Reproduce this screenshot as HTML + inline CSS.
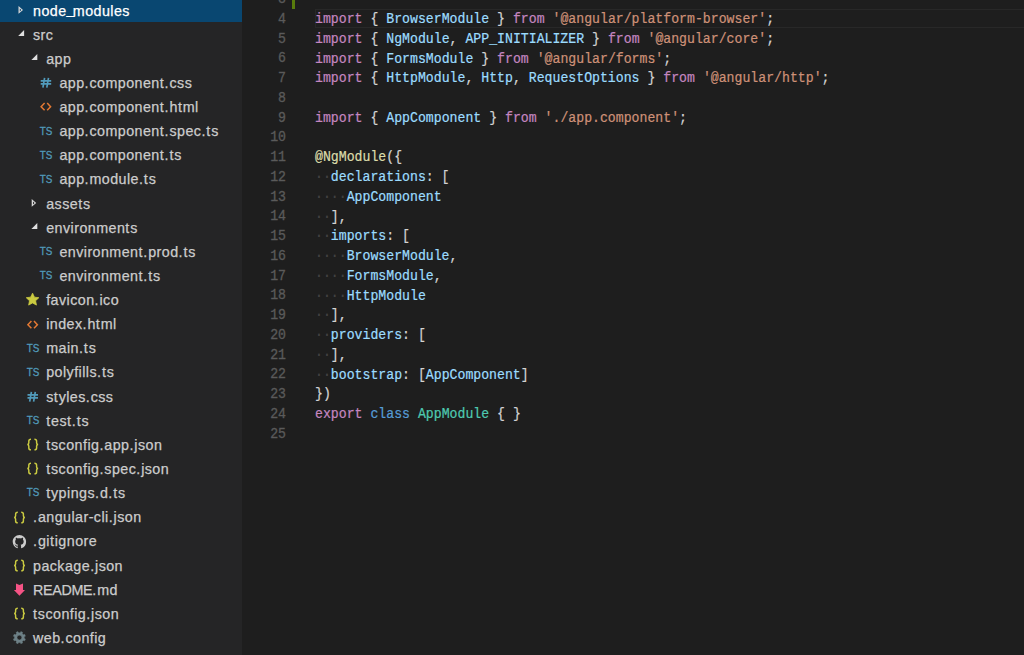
<!DOCTYPE html>
<html><head><meta charset="utf-8"><style>
html,body{margin:0;padding:0;width:1024px;height:655px;overflow:hidden;background:#1e1e1e}
#side{position:absolute;left:0;top:0;width:242px;height:655px;background:#252526;overflow:hidden}
.row{position:absolute;left:0;width:242px;height:24.13px}
.row.sel{background:#094771}
.nm{position:absolute;top:0;font-family:"Liberation Sans",sans-serif;font-size:14.3px;letter-spacing:0.44px;-webkit-text-stroke:0.25px currentColor;line-height:24.13px;color:#cccccc;white-space:nowrap}
.sel .nm{color:#ffffff} .nm .d{letter-spacing:0.9px} .nm .t{letter-spacing:0.87px} .nm .u{letter-spacing:-0.31px} .nm .us{position:relative;top:-1.6px;letter-spacing:-1.7px}
.ic{position:absolute;left:0;top:0;display:block;overflow:visible}
#ed{position:absolute;left:242px;top:0;width:782px;height:655px;background:#1e1e1e;overflow:hidden}
.ln,.cl{position:absolute;font-family:"Liberation Mono",monospace;font-size:13.2px;line-height:19.75px;transform:scaleY(1.1);transform-origin:0 14.4px}
.ln{left:0;width:44px;text-align:right;color:#5a5a5a;-webkit-text-stroke:0.3px currentColor;margin-top:-0.2px}
.cl{left:73px;color:#d4d4d4;white-space:pre;-webkit-text-stroke:0.2px currentColor}
i{font-style:normal} .k{color:#c586c0} .v{color:#9cdcfe} .s{color:#ce9178} .p{color:#d4d4d4} .f{color:#dcdcaa} .b{color:#569cd6} .c{color:#4ec9b0} .w{color:#444444}
#hl{position:absolute;left:73px;right:0;top:9px;height:16.6px;border:1px solid #282828;border-right:none}
#git{position:absolute;left:50px;top:0;width:3px;height:9px;background:#587c0c}
</style></head><body>
<div id="side">
<div class="row sel" style="top:-2.15px"><span class="nm" style="left:33.0px;top:0.7px">node<i class=us>_</i>modules</span><svg class="ic" width="242" height="25"><path d="M18.50,8.1 L23.00,11.95 L18.50,15.8 Z M19.80,10.5 L19.80,13.4 L21.30,11.95 Z" fill="#d8d8d8" fill-rule="evenodd"/></svg></div>
<div class="row" style="top:21.98px"><span class="nm" style="left:33.0px;top:0.7px">src</span><svg class="ic" width="242" height="25"><path d="M18.20,14.12 L24.10,14.12 L24.10,7.92 Z" fill="#e0e0e0"/></svg></div>
<div class="row" style="top:46.11px"><span class="nm" style="left:46.2px;top:0.7px">app</span><svg class="ic" width="242" height="25"><path d="M31.40,14.12 L37.30,14.12 L37.30,7.92 Z" fill="#e0e0e0"/></svg></div>
<div class="row" style="top:70.24px"><span class="nm" style="left:59.4px;top:0.7px">app<i class=d>.</i>componen<i class=t>t</i><i class=d>.</i>css</span><svg class="ic" width="242" height="25"><path d="M40.70,10.95 H51.20 M40.70,13.9 H51.20 M44.60,7.9 L42.90,17.7 M48.50,7.9 L46.80,17.7" stroke="#519aba" stroke-width="1.7" fill="none"/></svg></div>
<div class="row" style="top:94.37px"><span class="nm" style="left:59.4px;top:0.7px">app<i class=d>.</i>componen<i class=t>t</i><i class=d>.</i>h<i class=t>t</i>ml</span><svg class="ic" width="242" height="25"><path d="M44.60,9.0 L41.10,12.65 L44.60,16.3 M47.20,9.0 L50.60,12.65 L47.20,16.3" stroke="#e37933" stroke-width="1.5" fill="none"/></svg></div>
<div class="row" style="top:118.50px"><span class="nm" style="left:59.4px;top:0.7px">app<i class=d>.</i>componen<i class=t>t</i><i class=d>.</i>spec<i class=d>.</i><i class=t>t</i>s</span><svg class="ic" width="242" height="25"><text x="39.85" y="15.8" font-family="Liberation Sans" font-size="11.5" fill="#519aba" stroke="#519aba" stroke-width="0.3" textLength="12.6" lengthAdjust="spacingAndGlyphs">TS</text></svg></div>
<div class="row" style="top:142.63px"><span class="nm" style="left:59.4px;top:0.7px">app<i class=d>.</i>componen<i class=t>t</i><i class=d>.</i><i class=t>t</i>s</span><svg class="ic" width="242" height="25"><text x="39.85" y="15.8" font-family="Liberation Sans" font-size="11.5" fill="#519aba" stroke="#519aba" stroke-width="0.3" textLength="12.6" lengthAdjust="spacingAndGlyphs">TS</text></svg></div>
<div class="row" style="top:166.76px"><span class="nm" style="left:59.4px;top:0.7px">app<i class=d>.</i>module<i class=d>.</i><i class=t>t</i>s</span><svg class="ic" width="242" height="25"><text x="39.85" y="15.8" font-family="Liberation Sans" font-size="11.5" fill="#519aba" stroke="#519aba" stroke-width="0.3" textLength="12.6" lengthAdjust="spacingAndGlyphs">TS</text></svg></div>
<div class="row" style="top:190.89px"><span class="nm" style="left:46.2px;top:0.7px">asse<i class=t>t</i>s</span><svg class="ic" width="242" height="25"><path d="M31.70,8.1 L36.20,11.95 L31.70,15.8 Z M33.00,10.5 L33.00,13.4 L34.50,11.95 Z" fill="#d8d8d8" fill-rule="evenodd"/></svg></div>
<div class="row" style="top:215.02px"><span class="nm" style="left:46.2px;top:0.7px">environmen<i class=t>t</i>s</span><svg class="ic" width="242" height="25"><path d="M31.40,14.12 L37.30,14.12 L37.30,7.92 Z" fill="#e0e0e0"/></svg></div>
<div class="row" style="top:239.15px"><span class="nm" style="left:59.4px;top:0.7px">environmen<i class=t>t</i><i class=d>.</i>prod<i class=d>.</i><i class=t>t</i>s</span><svg class="ic" width="242" height="25"><text x="39.85" y="15.8" font-family="Liberation Sans" font-size="11.5" fill="#519aba" stroke="#519aba" stroke-width="0.3" textLength="12.6" lengthAdjust="spacingAndGlyphs">TS</text></svg></div>
<div class="row" style="top:263.28px"><span class="nm" style="left:59.4px;top:0.7px">environmen<i class=t>t</i><i class=d>.</i><i class=t>t</i>s</span><svg class="ic" width="242" height="25"><text x="39.85" y="15.8" font-family="Liberation Sans" font-size="11.5" fill="#519aba" stroke="#519aba" stroke-width="0.3" textLength="12.6" lengthAdjust="spacingAndGlyphs">TS</text></svg></div>
<div class="row" style="top:287.41px"><span class="nm" style="left:46.2px;top:0.7px">favicon<i class=d>.</i>ico</span><svg class="ic" width="242" height="25"><path d="M32.55,6.15 L34.43,10.16 L38.83,10.71 L35.59,13.74 L36.43,18.09 L32.55,15.95 L28.67,18.09 L29.51,13.74 L26.27,10.71 L30.67,10.16 Z" fill="#cbcb41" stroke="#cbcb41" stroke-width="0.8" stroke-linejoin="round"/></svg></div>
<div class="row" style="top:311.54px"><span class="nm" style="left:46.2px;top:0.7px">index<i class=d>.</i>h<i class=t>t</i>ml</span><svg class="ic" width="242" height="25"><path d="M31.40,9.0 L27.90,12.65 L31.40,16.3 M34.00,9.0 L37.40,12.65 L34.00,16.3" stroke="#e37933" stroke-width="1.5" fill="none"/></svg></div>
<div class="row" style="top:335.67px"><span class="nm" style="left:46.2px;top:0.7px">main<i class=d>.</i><i class=t>t</i>s</span><svg class="ic" width="242" height="25"><text x="26.65" y="15.8" font-family="Liberation Sans" font-size="11.5" fill="#519aba" stroke="#519aba" stroke-width="0.3" textLength="12.6" lengthAdjust="spacingAndGlyphs">TS</text></svg></div>
<div class="row" style="top:359.80px"><span class="nm" style="left:46.2px;top:0.7px">polyfills<i class=d>.</i><i class=t>t</i>s</span><svg class="ic" width="242" height="25"><text x="26.65" y="15.8" font-family="Liberation Sans" font-size="11.5" fill="#519aba" stroke="#519aba" stroke-width="0.3" textLength="12.6" lengthAdjust="spacingAndGlyphs">TS</text></svg></div>
<div class="row" style="top:383.93px"><span class="nm" style="left:46.2px;top:0.7px">s<i class=t>t</i>yles<i class=d>.</i>css</span><svg class="ic" width="242" height="25"><path d="M27.50,10.95 H38.00 M27.50,13.9 H38.00 M31.40,7.9 L29.70,17.7 M35.30,7.9 L33.60,17.7" stroke="#519aba" stroke-width="1.7" fill="none"/></svg></div>
<div class="row" style="top:408.06px"><span class="nm" style="left:46.2px;top:0.7px"><i class=t>t</i>es<i class=t>t</i><i class=d>.</i><i class=t>t</i>s</span><svg class="ic" width="242" height="25"><text x="26.65" y="15.8" font-family="Liberation Sans" font-size="11.5" fill="#519aba" stroke="#519aba" stroke-width="0.3" textLength="12.6" lengthAdjust="spacingAndGlyphs">TS</text></svg></div>
<div class="row" style="top:432.19px"><span class="nm" style="left:46.2px;top:0.7px"><i class=t>t</i>sconfig<i class=d>.</i>app<i class=d>.</i>json</span><svg class="ic" width="242" height="25"><path d="M31.00,7.25 C29.40,7.25 28.80,7.8 28.80,9.2 L28.80,11.1 C28.80,12.0 28.10,12.45 27.30,12.5 C28.10,12.55 28.80,13.0 28.80,13.9 L28.80,16.0 C28.80,17.3 29.40,17.85 31.00,17.85 M34.40,7.25 C36.00,7.25 36.60,7.8 36.60,9.2 L36.60,11.1 C36.60,12.0 37.30,12.45 38.10,12.5 C37.30,12.55 36.60,13.0 36.60,13.9 L36.60,16.0 C36.60,17.3 36.00,17.85 34.40,17.85" stroke="#cbcb41" stroke-width="1.45" fill="none"/></svg></div>
<div class="row" style="top:456.32px"><span class="nm" style="left:46.2px;top:0.7px"><i class=t>t</i>sconfig<i class=d>.</i>spec<i class=d>.</i>json</span><svg class="ic" width="242" height="25"><path d="M31.00,7.25 C29.40,7.25 28.80,7.8 28.80,9.2 L28.80,11.1 C28.80,12.0 28.10,12.45 27.30,12.5 C28.10,12.55 28.80,13.0 28.80,13.9 L28.80,16.0 C28.80,17.3 29.40,17.85 31.00,17.85 M34.40,7.25 C36.00,7.25 36.60,7.8 36.60,9.2 L36.60,11.1 C36.60,12.0 37.30,12.45 38.10,12.5 C37.30,12.55 36.60,13.0 36.60,13.9 L36.60,16.0 C36.60,17.3 36.00,17.85 34.40,17.85" stroke="#cbcb41" stroke-width="1.45" fill="none"/></svg></div>
<div class="row" style="top:480.45px"><span class="nm" style="left:46.2px;top:0.7px"><i class=t>t</i>ypings<i class=d>.</i>d<i class=d>.</i><i class=t>t</i>s</span><svg class="ic" width="242" height="25"><text x="26.65" y="15.8" font-family="Liberation Sans" font-size="11.5" fill="#519aba" stroke="#519aba" stroke-width="0.3" textLength="12.6" lengthAdjust="spacingAndGlyphs">TS</text></svg></div>
<div class="row" style="top:504.58px"><span class="nm" style="left:33.0px;top:0.7px"><i class=d>.</i>angular-cli<i class=d>.</i>json</span><svg class="ic" width="242" height="25"><path d="M17.80,7.25 C16.20,7.25 15.60,7.8 15.60,9.2 L15.60,11.1 C15.60,12.0 14.90,12.45 14.10,12.5 C14.90,12.55 15.60,13.0 15.60,13.9 L15.60,16.0 C15.60,17.3 16.20,17.85 17.80,17.85 M21.20,7.25 C22.80,7.25 23.40,7.8 23.40,9.2 L23.40,11.1 C23.40,12.0 24.10,12.45 24.90,12.5 C24.10,12.55 23.40,13.0 23.40,13.9 L23.40,16.0 C23.40,17.3 22.80,17.85 21.20,17.85" stroke="#cbcb41" stroke-width="1.45" fill="none"/></svg></div>
<div class="row" style="top:528.71px"><span class="nm" style="left:33.0px;top:0.7px"><i class=d>.</i>gi<i class=t>t</i>ignore</span><svg class="ic" width="242" height="25"><path transform="translate(12.70,6.1) scale(0.8375)" d="M8 0C3.58 0 0 3.58 0 8c0 3.54 2.29 6.53 5.47 7.59.4.07.55-.17.55-.38 0-.19-.01-.82-.01-1.49-2.01.37-2.53-.49-2.69-.94-.09-.23-.48-.94-.82-1.13-.28-.15-.68-.52-.01-.53.63-.01 1.08.58 1.23.82.72 1.21 1.87.87 2.33.66.07-.52.28-.87.51-1.07-1.78-.2-3.64-.89-3.64-3.95 0-.87.31-1.59.82-2.15-.08-.2-.36-1.02.08-2.12 0 0 .67-.21 2.2.82.64-.18 1.32-.27 2-.27.68 0 1.36.09 2 .27 1.53-1.04 2.2-.82 2.2-.82.44 1.1.16 1.92.08 2.12.51.56.82 1.27.82 2.15 0 3.07-1.87 3.75-3.65 3.95.29.25.54.73.54 1.48 0 1.07-.01 1.930-.01 2.2 0 .21.15.46.55.38A8.013 8.013 0 0016 8c0-4.42-3.58-8-8-8z" fill="#cccccc"/></svg></div>
<div class="row" style="top:552.84px"><span class="nm" style="left:33.0px;top:0.7px">package<i class=d>.</i>json</span><svg class="ic" width="242" height="25"><path d="M17.80,7.25 C16.20,7.25 15.60,7.8 15.60,9.2 L15.60,11.1 C15.60,12.0 14.90,12.45 14.10,12.5 C14.90,12.55 15.60,13.0 15.60,13.9 L15.60,16.0 C15.60,17.3 16.20,17.85 17.80,17.85 M21.20,7.25 C22.80,7.25 23.40,7.8 23.40,9.2 L23.40,11.1 C23.40,12.0 24.10,12.45 24.90,12.5 C24.10,12.55 23.40,13.0 23.40,13.9 L23.40,16.0 C23.40,17.3 22.80,17.85 21.20,17.85" stroke="#cbcb41" stroke-width="1.45" fill="none"/></svg></div>
<div class="row" style="top:576.97px"><span class="nm" style="left:33.0px;top:0.7px"><i class=u>R</i><i class=u>E</i><i class=u>A</i><i class=u>D</i><i class=u>M</i><i class=u>E</i><i class=d>.</i>md</span><svg class="ic" width="242" height="25"><path d="M16.00,6.4 L19.40,7.9 L23.00,6.4 L23.00,13 L25.00,13 L19.45,18.8 L13.90,13 L16.00,13 Z" fill="#f55385"/></svg></div>
<div class="row" style="top:601.10px"><span class="nm" style="left:33.0px;top:0.7px"><i class=t>t</i>sconfig<i class=d>.</i>json</span><svg class="ic" width="242" height="25"><path d="M17.80,7.25 C16.20,7.25 15.60,7.8 15.60,9.2 L15.60,11.1 C15.60,12.0 14.90,12.45 14.10,12.5 C14.90,12.55 15.60,13.0 15.60,13.9 L15.60,16.0 C15.60,17.3 16.20,17.85 17.80,17.85 M21.20,7.25 C22.80,7.25 23.40,7.8 23.40,9.2 L23.40,11.1 C23.40,12.0 24.10,12.45 24.90,12.5 C24.10,12.55 23.40,13.0 23.40,13.9 L23.40,16.0 C23.40,17.3 22.80,17.85 21.20,17.85" stroke="#cbcb41" stroke-width="1.45" fill="none"/></svg></div>
<div class="row" style="top:625.23px"><span class="nm" style="left:33.0px;top:0.7px">web<i class=d>.</i>config</span><svg class="ic" width="242" height="25"><path d="M19.40,7.70 L20.17,7.76 L20.85,6.57 L22.64,7.31 L22.28,8.64 L22.86,9.14 L23.36,9.72 L24.69,9.36 L25.43,11.15 L24.24,11.83 L24.30,12.60 L24.24,13.37 L25.43,14.05 L24.69,15.84 L23.36,15.48 L22.86,16.06 L22.28,16.56 L22.64,17.89 L20.85,18.63 L20.17,17.44 L19.40,17.50 L18.63,17.44 L17.95,18.63 L16.16,17.89 L16.52,16.56 L15.94,16.06 L15.44,15.48 L14.11,15.84 L13.37,14.05 L14.56,13.37 L14.50,12.60 L14.56,11.83 L13.37,11.15 L14.11,9.36 L15.44,9.72 L15.94,9.14 L16.52,8.64 L16.16,7.31 L17.95,6.57 L18.63,7.76 Z M21.80,12.60 A2.4,2.4 0 1,0 17.00,12.60 A2.4,2.4 0 1,0 21.80,12.60 Z" fill="#6d8086" fill-rule="evenodd" stroke="#6d8086" stroke-width="0.4" stroke-linejoin="round"/></svg></div>
</div>
<div id="ed">
<div id="hl"></div>
<div id="git"></div>
<div class="ln" style="top:-9.75px">3</div><div class="cl" style="top:-9.75px"></div>
<div class="ln" style="top:10.00px">4</div><div class="cl" style="top:10.00px"><i class=k>import</i> <i class=p>{</i> <i class=v>BrowserModule</i> <i class=p>}</i> <i class=k>from</i> <i class=s>'@angular/platform-browser'</i><i class=p>;</i></div>
<div class="ln" style="top:29.75px">5</div><div class="cl" style="top:29.75px"><i class=k>import</i> <i class=p>{</i> <i class=v>NgModule</i><i class=p>,</i> <i class=v>APP_INITIALIZER</i> <i class=p>}</i> <i class=k>from</i> <i class=s>'@angular/core'</i><i class=p>;</i></div>
<div class="ln" style="top:49.50px">6</div><div class="cl" style="top:49.50px"><i class=k>import</i> <i class=p>{</i> <i class=v>FormsModule</i> <i class=p>}</i> <i class=k>from</i> <i class=s>'@angular/forms'</i><i class=p>;</i></div>
<div class="ln" style="top:69.25px">7</div><div class="cl" style="top:69.25px"><i class=k>import</i> <i class=p>{</i> <i class=v>HttpModule</i><i class=p>,</i> <i class=v>Http</i><i class=p>,</i> <i class=v>RequestOptions</i> <i class=p>}</i> <i class=k>from</i> <i class=s>'@angular/http'</i><i class=p>;</i></div>
<div class="ln" style="top:89.00px">8</div><div class="cl" style="top:89.00px"></div>
<div class="ln" style="top:108.75px">9</div><div class="cl" style="top:108.75px"><i class=k>import</i> <i class=p>{</i> <i class=v>AppComponent</i> <i class=p>}</i> <i class=k>from</i> <i class=s>'./app.component'</i><i class=p>;</i></div>
<div class="ln" style="top:128.50px">10</div><div class="cl" style="top:128.50px"></div>
<div class="ln" style="top:148.25px">11</div><div class="cl" style="top:148.25px"><i class=f>@NgModule</i><i class=p>({</i></div>
<div class="ln" style="top:168.00px">12</div><div class="cl" style="top:168.00px"><i class=w>··</i><i class=v>declarations</i><i class=p>: [</i></div>
<div class="ln" style="top:187.75px">13</div><div class="cl" style="top:187.75px"><i class=w>····</i><i class=v>AppComponent</i></div>
<div class="ln" style="top:207.50px">14</div><div class="cl" style="top:207.50px"><i class=w>··</i><i class=p>],</i></div>
<div class="ln" style="top:227.25px">15</div><div class="cl" style="top:227.25px"><i class=w>··</i><i class=v>imports</i><i class=p>: [</i></div>
<div class="ln" style="top:247.00px">16</div><div class="cl" style="top:247.00px"><i class=w>····</i><i class=v>BrowserModule</i><i class=p>,</i></div>
<div class="ln" style="top:266.75px">17</div><div class="cl" style="top:266.75px"><i class=w>····</i><i class=v>FormsModule</i><i class=p>,</i></div>
<div class="ln" style="top:286.50px">18</div><div class="cl" style="top:286.50px"><i class=w>····</i><i class=v>HttpModule</i></div>
<div class="ln" style="top:306.25px">19</div><div class="cl" style="top:306.25px"><i class=w>··</i><i class=p>],</i></div>
<div class="ln" style="top:326.00px">20</div><div class="cl" style="top:326.00px"><i class=w>··</i><i class=v>providers</i><i class=p>: [</i></div>
<div class="ln" style="top:345.75px">21</div><div class="cl" style="top:345.75px"><i class=w>··</i><i class=p>],</i></div>
<div class="ln" style="top:365.50px">22</div><div class="cl" style="top:365.50px"><i class=w>··</i><i class=v>bootstrap</i><i class=p>: [</i><i class=v>AppComponent</i><i class=p>]</i></div>
<div class="ln" style="top:385.25px">23</div><div class="cl" style="top:385.25px"><i class=p>})</i></div>
<div class="ln" style="top:405.00px">24</div><div class="cl" style="top:405.00px"><i class=k>export</i> <i class=b>class</i> <i class=c>AppModule</i> <i class=p>{ }</i></div>
<div class="ln" style="top:424.75px">25</div><div class="cl" style="top:424.75px"></div>
</div>
</body></html>
